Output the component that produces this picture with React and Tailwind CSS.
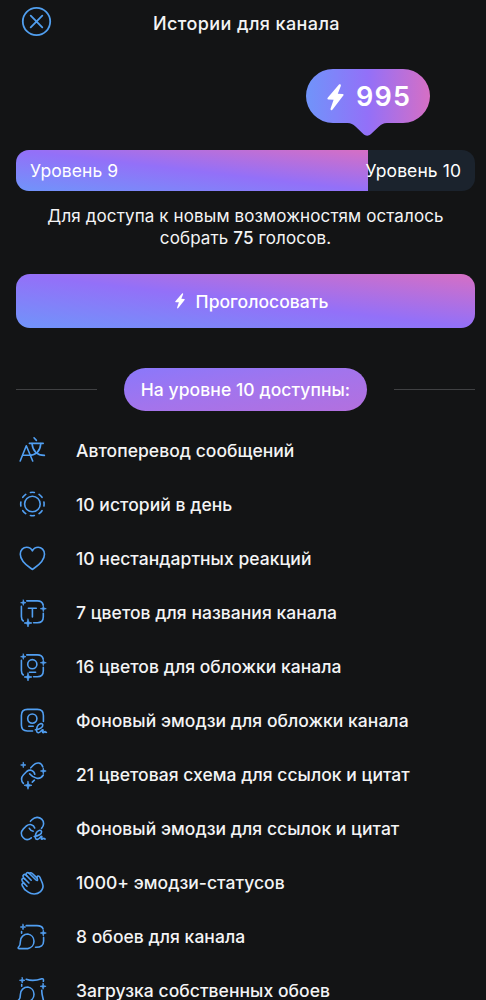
import React from 'react';

const BOLT = "M12 0.6 L0.7 13.8 C0.1 14.7 0.4 15.5 1.4 15.5 L6.6 15.7 L3.6 24.4 C3.2 26.1 4.6 26.8 5.6 25.5 L16.3 11.6 C16.9 10.7 16.6 9.9 15.6 9.9 L10.8 9.7 L13.8 1.9 C14.2 0.4 12.9 -0.4 12 0.6 Z";

// four-pointed star centred on x, y
function Spark({ x, y, r }) {
  const k = r * 0.22;
  return (
    <path
      fill="currentColor"
      strokeWidth="0.7"
      d={`M${x} ${y - r} L${x + k} ${y - k} L${x + r} ${y} L${x + k} ${y + k} L${x} ${y + r} L${x - k} ${y + k} L${x - r} ${y} L${x - k} ${y - k} Z`}
    />
  );
}

function SparkFrame() {
  return (
    <>
      <path d="M10.8 5.9 H21.3 Q26.3 5.9 27.2 10" />
      <path d="M5.4 11.4 V21.5 Q5.4 24.6 7.3 26" />
      <path d="M27.3 18.2 V21.7 Q27.3 27.7 21.3 27.7 H17.6" />
      <Spark x={7.3} y={7.7} r={2.7} />
      <Spark x={27.3} y={13.7} r={3} />
      <Spark x={12} y={28} r={4} />
    </>
  );
}

// handwritten "e" used by the background emoji icons
const SCRIPT = "M19.4 26.8 C23.4 26.4 27.2 24.3 26.8 21.9 C26.3 19.7 22.6 20.3 21.2 23.7 C19.8 27.4 20.6 29.8 22.5 29.7 C24.8 29.5 25.6 26.6 26.8 26.7 C28 26.9 25.3 29.4 27.2 29.6 C28.2 29.6 28.5 28.3 29 28.5 C29.4 28.8 29.4 29.5 30.4 29.3";

const ICONS = {
  translate: (
    <>
      <path d="M4.2 28 L10.3 12.8 L16.7 28" />
      <path d="M18 4.8 L20.4 7.4 M13.4 10.4 H27.2" />
      <path d="M24.8 10.6 C24.2 17.5 20.5 22.2 13 22.2 H6.7" />
      <path d="M16 10.6 C16.8 18 20 22.2 28.4 22.4" />
    </>
  ),
  stories: (
    <>
      <circle cx="16.4" cy="17" r="7.8" />
      <circle cx="16.4" cy="17" r="11.7" pathLength="8" strokeDasharray="0.45 0.55" strokeDashoffset="0.225" />
    </>
  ),
  heart: (
    <path d="M16.4 28.5 C14.5 26.8 4.3 21.5 4.3 13.2 C4.3 9 7.2 6.2 10.6 6.2 C13.2 6.2 15.3 7.6 16.4 9.9 C17.5 7.6 19.5 6.2 22.1 6.2 C25.5 6.2 28.5 9 28.5 13.2 C28.5 21.5 18.3 26.8 16.4 28.5 Z" />
  ),
  name: (
    <>
      <SparkFrame />
      <path d="M12.4 13.3 H20.3 M16.4 13.3 V22" />
    </>
  ),
  cover: (
    <>
      <SparkFrame />
      <circle cx="16.3" cy="15.2" r="4.6" />
      <path d="M13.5 23.2 H19.6" />
    </>
  ),
  coverEmoji: (
    <>
      <path d="M16.6 28 H11.4 Q5.4 28 5.4 22 V12.4 Q5.4 6.4 11.4 6.4 H21.4 Q27.4 6.4 27.4 12.4 V18.4" />
      <circle cx="16.3" cy="15.6" r="4.6" />
      <path d="M12.8 23.3 H17.2" />
      <path d={SCRIPT} />
    </>
  ),
  links: (
    <>
      <path d="M14.8 10.8 L17.5 8 C20.6 4.8 25.6 5.3 26.7 9.8" />
      <path d="M27.3 18 C25.8 20.3 23.5 21.8 20.8 21.2 C17.6 20.6 15.2 18.8 13.6 16.8" />
      <path d="M18.8 17.3 C18.2 13.2 14 12 10.7 14.5 L7.5 17.7 C5 20.3 4.8 24 7.4 26.4" />
      <path d="M16.3 25.2 L18.4 23.2" />
      <Spark x={7.3} y={8} r={2.7} />
      <Spark x={27.3} y={14} r={2.9} />
      <Spark x={12} y={28.3} r={4} />
    </>
  ),
  linksEmoji: (
    <>
      <path d="M14.4 10.3 L16.2 8.5 C19 5.8 23 5.6 25.7 8.2 C28.4 10.8 28.2 14.6 25.5 17.4" />
      <path d="M18.7 17 C17.6 13.4 13.5 12.5 10.3 15 L7.4 17.9 C4.8 20.8 4.8 24.2 7.3 26.8 C9.6 29.2 12.8 29 15.3 26.8" />
      <path d="M13.3 17.3 C14.2 18.9 15.6 19.9 17.2 20.2" />
      <path transform="translate(-1.2 -1.3)" d={SCRIPT} />
    </>
  ),
  hand: (
    <>
      <path d="M8.6 24.4 L6.3 20.8 C5.2 18.7 7.1 17.4 8.5 18.8 L11 21.3" />
      <path d="M8.5 18.8 L6.3 16.2 C5 14 7 12.4 8.7 13.9 L12.9 18" />
      <path d="M8.7 13.9 L7.4 12.4 C6 10.2 8.3 8.5 10.1 10.2 L15.2 15.2" />
      <path d="M10.8 10.9 L10.3 10.2 C9.2 8 11.6 6.7 13.3 8.4 L20 15 C21.2 16 21.7 15.4 21.5 14.4 L21 12.6 C20.7 10.7 23.1 10.3 23.9 12.2 L26.4 18.2 C27.6 21.4 26.8 24.4 24.5 26.6 C20.8 29.8 15.6 29.5 12.2 27.1 C10.7 26 9.6 25.4 8.6 24.4" />
      <path d="M13.3 8.4 C14.3 7.2 15.6 7.7 16.6 8.7 L20.9 12.9" />
    </>
  ),
  wallpaper: (
    <>
      <path d="M10.2 6.6 H21 C24.5 6.6 26.3 7.5 27 9.7" />
      <path d="M5.6 12.6 V14.2 M27.6 18.4 V22 C27.6 26.4 25 28.4 19.5 28.3" />
      <path d="M11.8 15 A7.4 7.4 0 0 1 11.8 29.6 H3 C2 29.6 1.8 28.7 2.6 28 C4.2 26.5 4.4 25 4.4 22.4 A7.4 7.4 0 0 1 11.8 15 Z" />
      <Spark x={7} y={8} r={2.8} />
      <Spark x={27.3} y={14} r={3} />
    </>
  ),
  upload: (
    <>
      <path d="M10.2 6.3 C15.5 8.2 20.5 7.6 25.8 5.8 C27.2 5.5 27.8 6.3 27.4 8.3" />
      <path d="M5.7 11.6 V13.2 M25.8 17.2 C25.5 20 26.4 22.5 27.6 28" />
      <path d="M11.8 14 A7.4 7.4 0 0 1 11.8 28.6 H3 C2 28.6 1.8 27.7 2.6 27 C4.2 25.5 4.4 24 4.4 21.4 A7.4 7.4 0 0 1 11.8 14 Z" />
      <Spark x={6.2} y={7.3} r={2.8} />
      <Spark x={27.1} y={13.3} r={3} />
    </>
  ),
};

const FEATURES = [
  { icon: 'translate', label: 'Автоперевод сообщений' },
  { icon: 'stories', label: '10 историй в день' },
  { icon: 'heart', label: '10 нестандартных реакций' },
  { icon: 'name', label: '7 цветов для названия канала' },
  { icon: 'cover', label: '16 цветов для обложки канала' },
  { icon: 'coverEmoji', label: 'Фоновый эмодзи для обложки канала' },
  { icon: 'links', label: '21 цветовая схема для ссылок и цитат' },
  { icon: 'linksEmoji', label: 'Фоновый эмодзи для ссылок и цитат' },
  { icon: 'hand', label: '1000+ эмодзи-статусов' },
  { icon: 'wallpaper', label: '8 обоев для канала' },
  { icon: 'upload', label: 'Загрузка собственных обоев' },
];

export default function App() {
  return (
    <div className="h-[1000px] w-[486px] overflow-hidden bg-[#131415] pr-[11px] pl-4 font-['Inter','Noto_Sans',sans-serif] text-[17.5px] tracking-[0.04px] text-[#f4f4f5]">
      <header className="flex h-[46px] items-center">
        <button className="-mt-[3px] ml-[5px] text-[#519fef]" aria-label="Закрыть">
          <svg width="31" height="31" viewBox="0 0 31 31" fill="none" stroke="currentColor" strokeWidth="1.8" strokeLinecap="round">
            <circle cx="15.5" cy="15.5" r="13.7" />
            <path d="M9.7 9.7 L21.3 21.3 M21.3 9.7 L9.7 21.3" />
          </svg>
        </button>
        <h1 className="flex-1 pt-px pr-[34px] text-center text-[18px] font-medium tracking-[0.4px] whitespace-nowrap">Истории для канала</h1>
      </header>

      {/* votes counter */}
      <div className="mt-[23px] ml-[290px] grid h-[68px] w-[124px]">
        <svg className="col-start-1 row-start-1" width="124" height="68" viewBox="0 0 124 68">
          <defs>
            <linearGradient id="votes" x1="0" x2="1" y1="0" y2="0">
              <stop offset="0" stopColor="#7094fa" />
              <stop offset="0.5" stopColor="#9370f8" />
              <stop offset="1" stopColor="#d66fc4" />
            </linearGradient>
          </defs>
          <path fill="url(#votes)" d="M27 0 H97 A27 27 0 0 1 97 54 H81 C77.5 54 75.5 55.2 73 57.5 L65 65 C62.5 67.3 59.8 67.3 57.3 65 L49.5 57.5 C47 55.2 45 54 41.5 54 H27 A27 27 0 0 1 27 0 Z" />
        </svg>
        <div className="col-start-1 row-start-1 flex h-[54px] items-center pt-[2px] pl-[21px] text-white">
          <svg width="17" height="27" viewBox="0 0 17 27" fill="currentColor"><path d={BOLT} /></svg>
          <span className="ml-[12px] text-[27px] font-semibold tracking-[1.2px]">995</span>
        </div>
      </div>

      {/* level progress */}
      <div className="mt-[13px] flex h-[41px] overflow-hidden rounded-[13px] bg-[#1b232d] tracking-[0.08px] text-white">
        <div className="flex w-[352px] shrink-0 items-center bg-[linear-gradient(to_top_right,#7094fa,#9370f8,#d66fc4)] pt-[2px] pl-[14px]">Уровень 9</div>
        <div className="flex min-w-0 flex-1 items-center justify-end pt-[2px] pr-[14px] whitespace-nowrap">
          <span className="z-10">Уровень 10</span>
        </div>
      </div>

      <p className="mt-[14px] text-center text-[17px] leading-[22px] tracking-[0.12px] whitespace-nowrap">
        Для доступа к новым возможностям осталось<br />
        собрать <span className="font-medium">75</span> голосов.
      </p>

      <button className="mt-[25px] flex h-[54px] w-full items-center justify-center rounded-[14px] bg-[linear-gradient(to_top_right,#7094fa,#9370f8,#d66fc4)] pl-[12px] font-medium text-white">
        <svg className="mr-[11px]" width="10" height="16" viewBox="0 0 17 27" fill="currentColor"><path d={BOLT} /></svg>
        <span className="pt-[2px]">Проголосовать</span>
      </button>

      <div className="mt-[39px] flex h-[44px] items-center justify-between">
        <div className="h-px w-[81px] bg-[#404143]" />
        <div className="flex h-[43px] w-[243px] items-center justify-center rounded-full bg-[linear-gradient(to_bottom_right,#8a78fb,#a374ec,#b370de)] pt-[2px] font-medium tracking-[0.07px] whitespace-nowrap text-white">
          На уровне 10 доступны:
        </div>
        <div className="h-px w-[81px] bg-[#404143]" />
      </div>

      <ul className="mt-[13px]">
        {FEATURES.map(f => (
          <li key={f.icon} className="flex h-[54px] items-center font-medium whitespace-nowrap">
            <svg className="mr-6 shrink-0 text-[#519ff2]" width="36" height="36" viewBox="0 0 36 36" fill="none" stroke="currentColor" strokeWidth="1.6" strokeLinecap="round" strokeLinejoin="round">
              {ICONS[f.icon]}
            </svg>
            {f.label}
          </li>
        ))}
      </ul>
    </div>
  );
}
